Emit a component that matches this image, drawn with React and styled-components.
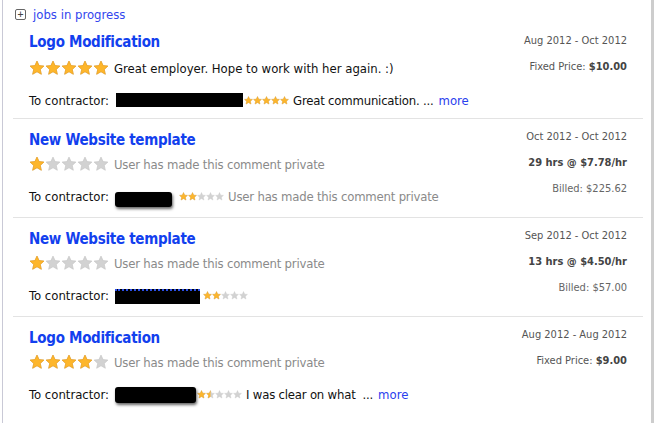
import React, { useId } from 'react';
import styled, { createGlobalStyle } from 'styled-components';

const GlobalStyle = createGlobalStyle`
    body {
        margin: 0;
        background: #fff;
        font-family: "DejaVu Sans Condensed", "DejaVu Sans", sans-serif;
        font-stretch: condensed;
    }
`

const Page = styled.div`
    display: flex;
    height: 423px;
    width: 654px;
    overflow: hidden;
`
const Panel = styled.div`
    flex: 1;
    margin-left: 2px;
    border-left: 1px solid #c9c9d6;
    padding: 0 8px 0 10px;
`
const ScrollTrack = styled.div`
    width: 3px;
    background: #cdcdcd;
`
const Header = styled.div`
    display: flex;
    align-items: center;
    gap: 7px;
    height: 16px;
    padding: 6px 0 0 2px;
`
const PlusBox = styled.span`
    width: 9px;
    height: 9px;
    border: 1px solid #666;
    border-radius: 2px;
    display: flex;
    align-items: center;
    justify-content: center;
    color: #444;
    font-size: 10px;
    line-height: 9px;
    font-family: "DejaVu Sans Mono", monospace;
`
const HeaderLink = styled.a`
    color: #3446ee;
    font-size: 13px;
    text-decoration: none;
`
const Job = styled.div`
    display: flex;
    justify-content: space-between;
    padding: ${p => (p.first ? '10px 16px 9px' : '11px 16px 12px')};
    border-top: ${p => (p.first ? 'none' : '1px solid #e3e3e3')};
`
const Main = styled.div`
    display: flex;
    flex-direction: column;
`
const Title = styled.a`
    color: #1240ee;
    font-size: 15px;
    letter-spacing: -0.3px;
    font-weight: bold;
    line-height: 20px;
    text-decoration: none;
`
const RatingRow = styled.div`
    display: flex;
    align-items: center;
    gap: 5px;
    margin-top: ${p => (p.first ? 7 : 5)}px;
    height: 18px;
`
const Comment = styled.span`
    font-size: 13px;
    white-space: pre;
    letter-spacing: ${p => (p.tight ? '-0.2px' : '0')};
    color: ${p => (p.private ? '#8a8a8a' : '#111')};
`
const ContractorRow = styled.div`
    display: flex;
    align-items: center;
    margin-top: 14px;
    height: 18px;
    font-size: 13px;
    color: #111;
    white-space: nowrap;
`
const Redacted = styled.span`
    display: inline-block;
    width: ${p => p.w}px;
    height: ${p => p.h || 14}px;
    margin: 0 ${p => p.gap || 1}px 0 ${p => p.left || 6}px;
    background: #000;
    box-shadow: ${p => (p.blur ? '1px 2px 3px rgba(0,0,0,0.6)' : 'none')};
    border-radius: ${p => (p.blur ? '3px' : '0')};
    border-top: ${p => (p.peek ? '2px dotted #2a4ee8' : 'none')};
    transform: translateY(${p => p.dy || 0}px);
`
const SmallStarWrap = styled.span`
    display: inline-flex;
    margin-right: 4px;
`
const More = styled.a`
    color: #2a40ee;
    text-decoration: none;
    margin-left: 5px;
`
const Side = styled.div`
    display: flex;
    flex-direction: column;
    align-items: flex-end;
    gap: 12px;
    font-size: 11px;
    line-height: 14px;
    color: #555;
    padding-top: ${p => (p.first ? 2 : 0)}px;
`
const Strong = styled.b`
    color: #444;
`
const Muted = styled.span`
    color: #666;
`

const STAR = '12,1.6 15.1,8.4 22.4,9.1 16.9,14.1 18.5,21.4 12,17.6 5.5,21.4 7.1,14.1 1.6,9.1 8.9,8.4';

const Star = ({ size, fill }) => {
    const id = useId();
    return (
        <svg width={size} height={size} viewBox="0 0 24 24" style={{ display: 'block' }}>
            <defs>
                <clipPath id={id}>
                    <rect x="0" y="0" width={24 * fill} height="24" />
                </clipPath>
            </defs>
            <polygon points={STAR} fill="#d2d2d2" stroke="#c6c6c6" strokeWidth="1" strokeLinejoin="round" />
            {fill > 0 && (
                <polygon points={STAR} fill="#fdb62c" stroke="#f0a018" strokeWidth="1" strokeLinejoin="round" clipPath={`url(#${id})`} />
            )}
        </svg>
    );
};

const Stars = ({ value, size, pitch }) => (
    <span style={{ display: 'inline-flex', gap: pitch - size }}>
        {[0, 1, 2, 3, 4].map(i => (
            <Star key={i} size={size} fill={Math.max(0, Math.min(1, value - i))} />
        ))}
    </span>
);

const PRIVATE = 'User has made this comment private';

const jobs = [
    {
        title: 'Logo Modification', rating: 5, comment: 'Great employer. Hope to work with her again. :)',
        redact: { w: 127, left: 7 }, toRating: 5, toComment: 'Great communication. ...', more: true,
        dates: 'Aug 2012 - Oct 2012', fixed: '$10.00',
    },
    {
        title: 'New Website template', rating: 1, comment: PRIVATE, private: true,
        redact: { w: 57, h: 15, blur: true, dy: 3, gap: 7 }, toRating: 2, toComment: PRIVATE, toPrivate: true,
        dates: 'Oct 2012 - Oct 2012', hours: '29 hrs @ $7.78/hr', billed: '$225.62',
    },
    {
        title: 'New Website template', rating: 1, comment: PRIVATE, private: true,
        redact: { w: 85, h: 13, peek: true, gap: 3, dy: 1 }, toRating: 2,
        dates: 'Sep 2012 - Oct 2012', hours: '13 hrs @ $4.50/hr', billed: '$57.00',
    },
    {
        title: 'Logo Modification', rating: 4, comment: PRIVATE, private: true,
        redact: { w: 81, h: 16, blur: true, dy: 1, gap: 1 }, toRating: 1.5, toComment: 'I was clear on what  ...', more: true,
        dates: 'Aug 2012 - Aug 2012', fixed: '$9.00',
    },
];

const App = () => (
    <>
        <GlobalStyle />
        <Page>
            <Panel>
                <Header>
                    <PlusBox>+</PlusBox>
                    <HeaderLink href="#">jobs in progress</HeaderLink>
                </Header>
                {jobs.map((job, i) => (
                    <Job key={i} first={i === 0}>
                        <Main>
                            <Title href="#">{job.title}</Title>
                            <RatingRow first={i === 0}>
                                <Stars value={job.rating} size={16} pitch={15.6} />
                                <Comment private={job.private} tight={job.private}>{job.comment}</Comment>
                            </RatingRow>
                            <ContractorRow>
                                To contractor:
                                <Redacted {...job.redact} />
                                <SmallStarWrap>
                                    <Stars value={job.toRating} size={9} pitch={8.8} />
                                </SmallStarWrap>
                                {job.toComment && <Comment private={job.toPrivate} tight>{job.toComment}</Comment>}
                                {job.more && <More href="#">more</More>}
                            </ContractorRow>
                        </Main>
                        <Side first={i === 0}>
                            <span>{job.dates}</span>
                            {job.fixed && <span>Fixed Price: <Strong>{job.fixed}</Strong></span>}
                            {job.hours && <Strong>{job.hours}</Strong>}
                            {job.billed && <Muted>Billed: {job.billed}</Muted>}
                        </Side>
                    </Job>
                ))}
            </Panel>
            <ScrollTrack />
        </Page>
    </>
);

export default App;
